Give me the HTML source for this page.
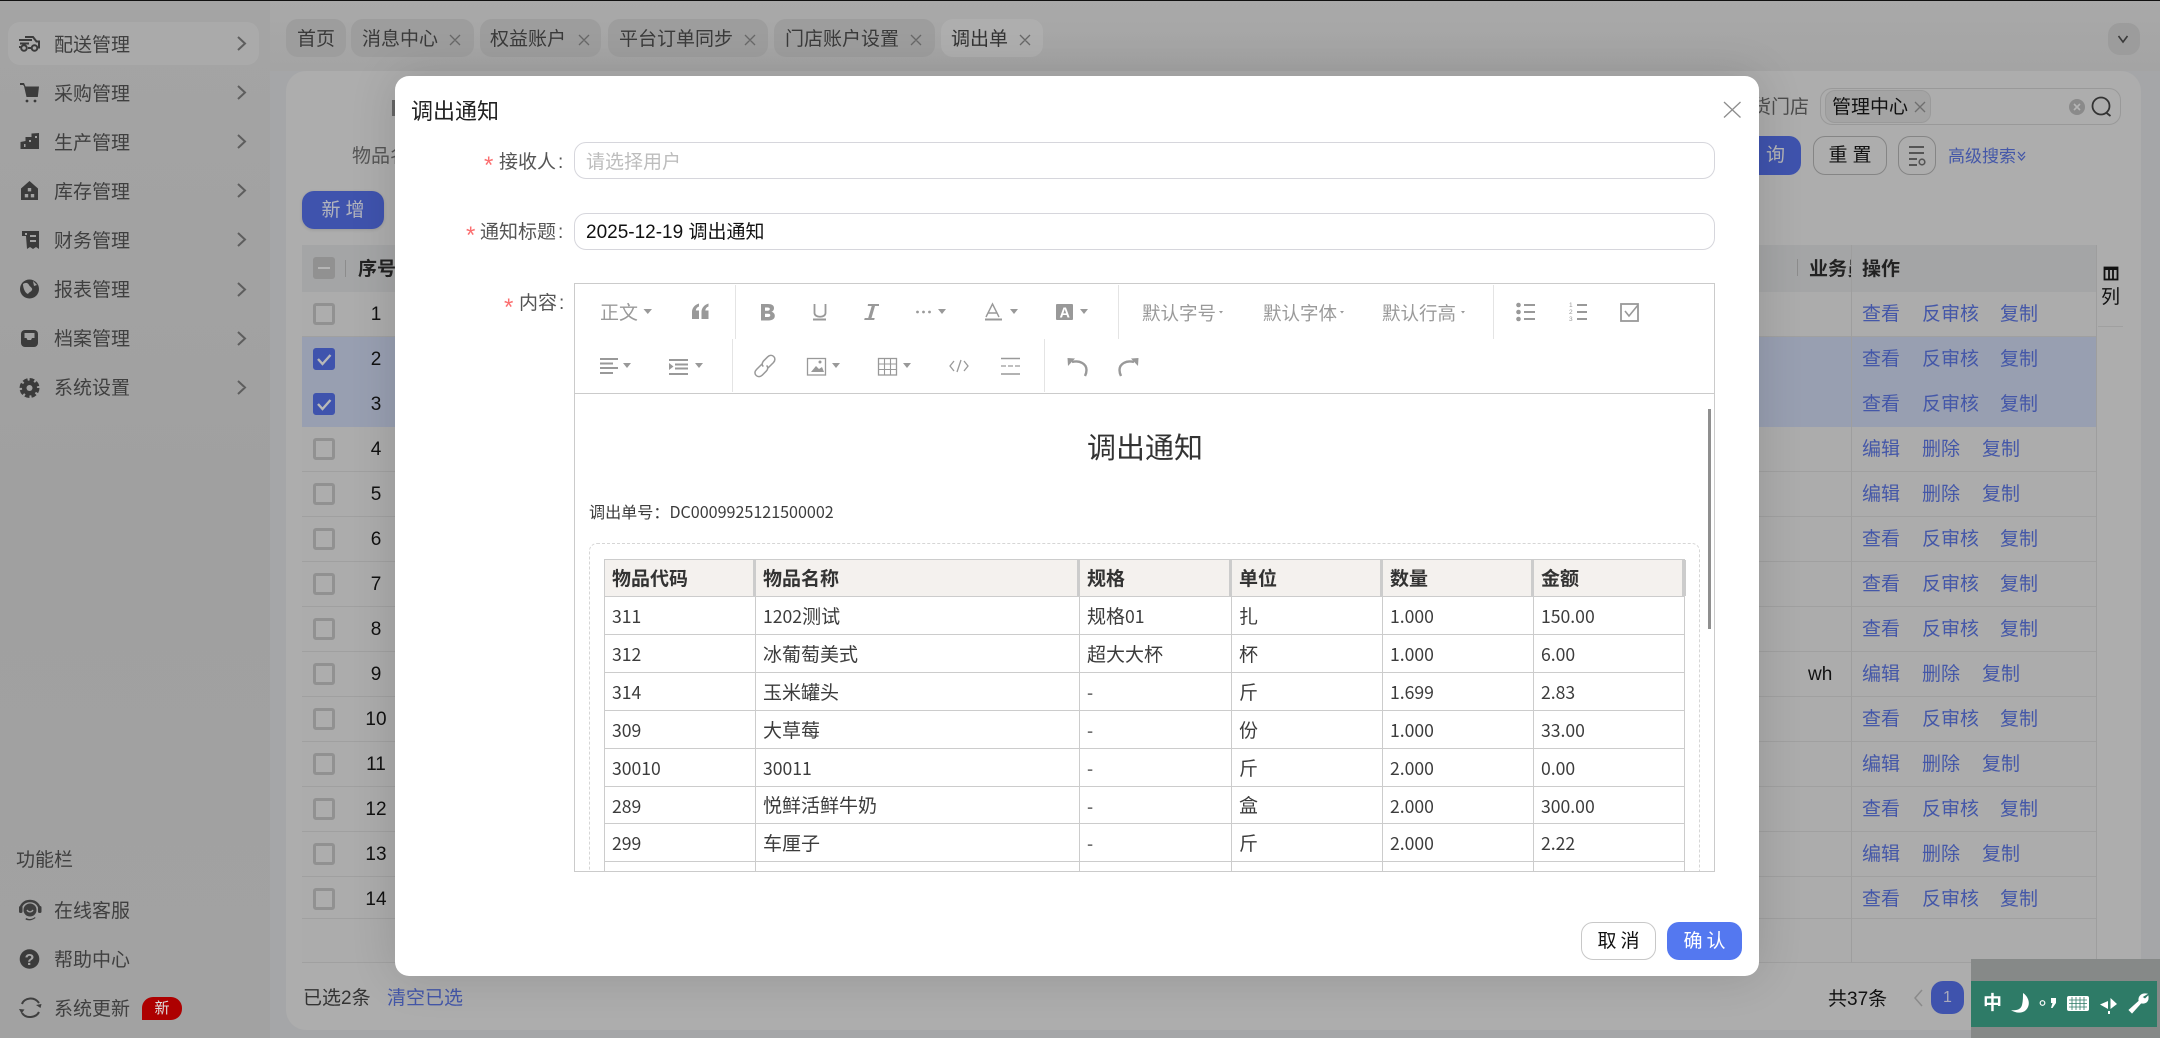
<!DOCTYPE html>
<html lang="zh-CN">
<head>
<meta charset="utf-8">
<title>调出单</title>
<style>
html,body{margin:0;padding:0;width:2160px;height:1038px;overflow:hidden;background:#a5a6a8}
body{font-family:"Liberation Sans","Noto Sans CJK SC",sans-serif;font-size:19px;color:#333;position:relative}
div,span{box-sizing:border-box}
.a{position:absolute}
.t{position:absolute;white-space:nowrap;line-height:24px;height:24px;margin-top:1px}
#side{left:0;top:0;width:270px;height:1038px;background:linear-gradient(180deg,#a4a4a4,#a0a0a0 50%,#a2a2a2)}
#top{left:270px;top:0;width:1890px;height:71px;background:linear-gradient(180deg,#a9a9a9,#a4a4a4)}
#bar{left:0;top:0;width:2160px;height:1.4px;background:#111}
.m{color:#3f3f3f;left:54px}
.tab{position:absolute;top:19px;height:38px;border-radius:12px;background:#9d9d9d}
.t.tabt{color:#3a3a3a;top:28px;margin-top:0}
#card{left:286px;top:71px;width:1855px;height:959px;border-radius:20px;background:#adadad}
#thead{left:302px;top:245px;width:1794px;height:47px;background:#a4a5a6}
.t.h{font-weight:700;color:#222;margin-top:2px}
#rows{left:302px;top:292px;width:1794px}
.r{position:relative;height:45px;background:#acacac;border-bottom:1px solid #a0a0a0}
.r.s{background:#989fb1;border-bottom-color:#989fb1}
.cb{position:absolute;left:11px;top:11px;width:22px;height:22px;border:3px solid #919191;border-radius:3px;background:#adadad}
.s .cb{background:#3f53ad;border-color:#3f53ad}
.n{position:absolute;left:54px;width:40px;text-align:center;top:11px;line-height:24px;color:#111}
.l{position:absolute;top:11px;line-height:24px;color:#4457a8;white-space:nowrap}
.l1{left:1560px}.l2{left:1620px}.l3{left:1698px}.l4{left:1680px}
.btn{position:absolute;border-radius:12px;text-align:center;white-space:nowrap}
#modal{left:395px;top:76px;width:1364px;height:900px;background:#fff;border-radius:14px;box-shadow:0 0 46px rgba(0,0,0,.14)}
.inp{position:absolute;left:179px;width:1141px;height:37px;border:1px solid #d6d6dc;border-radius:12px}
.lab{color:#555}
.lab i{font-style:normal;margin-left:2px}
.t.star{color:#fb6f70;font-size:24px;margin-top:0}
#ed{left:179px;top:207px;width:1141px;height:589px;border:1.4px solid #cbcbcb;background:#fff}
#edc{left:0;top:109px;width:1139px;height:478px;overflow:hidden;border-top:1.4px solid #cbcbcb}
.t.tb{color:#9a9a9a;margin-top:2px}
.dv{position:absolute;width:1px;background:#e4e4e4}
table{position:absolute;left:29px;top:165px;border-collapse:collapse;table-layout:fixed;width:1080px}
td,th{border:1.4px solid #ccc;padding:4px 0 0 7px;text-align:left;font-size:19px;line-height:24px;color:#3c3c3c;white-space:nowrap;position:relative;box-sizing:border-box}
td{overflow:hidden}
th{background:#f4f1ee;font-weight:700;color:#333}
th:after{content:"";position:absolute;right:-2px;top:0;bottom:0;width:4px;background:#ccc}
td span{font-family:"Noto Sans CJK SC",sans-serif;font-size:17.6px}
svg#ov{position:absolute;left:0;top:0;width:2160px;height:1038px;pointer-events:none}
</style>
</head>
<body>
<div class="a" id="side"></div>
<div class="a" id="top"></div>
<div class="a" style="left:8px;top:22px;width:251px;height:43px;border-radius:12px;background:#aaa"></div>
<div class="t m" style="top:33px">配送管理</div>
<div class="t m" style="top:82px">采购管理</div>
<div class="t m" style="top:131px">生产管理</div>
<div class="t m" style="top:180px">库存管理</div>
<div class="t m" style="top:229px">财务管理</div>
<div class="t m" style="top:278px">报表管理</div>
<div class="t m" style="top:327px">档案管理</div>
<div class="t m" style="top:376px">系统设置</div>
<div class="t m" style="left:16px;top:848px">功能栏</div>
<div class="t m" style="top:899px">在线客服</div>
<div class="t m" style="top:948px">帮助中心</div>
<div class="t m" style="top:997px">系统更新</div>
<div class="a" style="left:142px;top:997px;width:40px;height:23px;background:#ad0000;border-radius:11px 11px 11px 0;color:#ddd;font-size:15px;line-height:23px;text-align:center">新</div>

<div class="tab" style="left:286px;width:60px"></div>
<div class="tab" style="left:351px;width:123px"></div>
<div class="tab" style="left:480px;width:121px"></div>
<div class="tab" style="left:608px;width:160px"></div>
<div class="tab" style="left:774px;width:161px"></div>
<div class="tab" style="left:941px;width:102px;background:#aeaeae"></div>
<div class="t tabt" style="left:297px">首页</div>
<div class="t tabt" style="left:362px">消息中心</div>
<div class="t tabt" style="left:490px">权益账户</div>
<div class="t tabt" style="left:619px">平台订单同步</div>
<div class="t tabt" style="left:785px">门店账户设置</div>
<div class="t tabt" style="left:951px;color:#333">调出单</div>
<div class="a" style="left:2108px;top:23px;width:32px;height:32px;border-radius:12px;background:#9c9c9c"></div>

<div class="a" id="card"></div>
<div class="t" style="left:352px;top:144px;color:#555">物品名</div>
<div class="a" style="left:392px;top:100px;width:3px;height:16px;background:#666"></div>
<div class="t" style="left:1759px;top:95px;width:50px;overflow:hidden;color:#4c4c4c;direction:rtl">货门店</div>
<div class="a" style="left:1820px;top:88px;width:301px;height:37px;border:1px solid #999;border-radius:12px"></div>
<div class="a" style="left:1825px;top:90px;width:106px;height:33px;border:1px solid #9a9a9a;border-radius:10px;background:#a4a4a4"></div>
<div class="t" style="left:1832px;top:95px;color:#111">管理中心</div>
<div class="btn" style="left:1740px;top:136px;width:61px;height:39px;background:#3f53ad;color:#b5b5b5;line-height:39px;text-align:right;padding-right:16px">询</div>
<div class="btn" style="left:1813px;top:136px;width:74px;height:39px;border:1px solid #858585;color:#111;line-height:37px;letter-spacing:5px;padding-left:5px">重置</div>
<div class="btn" style="left:1898px;top:136px;width:38px;height:39px;border:1px solid #858585"></div>
<div class="t" style="left:1948px;top:144px;font-size:17px;color:#4457a8">高级搜索</div>
<div class="btn" style="left:302px;top:191px;width:82px;height:38px;background:#3f53ad;color:#b2b4bd;line-height:40px;letter-spacing:5px;padding-left:5px;box-shadow:0 1px 3px rgba(0,0,0,.12)">新增</div>

<div class="a" id="thead"></div>
<div class="a" style="left:313px;top:257px;width:22px;height:22px;background:#919191;border-radius:3px"></div>
<div class="a" style="left:318px;top:267px;width:12px;height:2px;background:#b5b5b5"></div>
<div class="a" style="left:345px;top:260px;width:1px;height:17px;background:#8c8c8c"></div>
<div class="t h" style="left:358px;top:256px">序号</div>
<div class="a" style="left:1797px;top:259px;width:1px;height:17px;background:#8c8c8c"></div>
<div class="t h" style="left:1809px;top:256px;width:42px;overflow:hidden">业务员</div>
<div class="t h" style="left:1862px;top:256px">操作</div>

<div class="a" id="rows">
<div class="r"><div class="cb"></div><div class="n">1</div><span class="l l1">查看</span><span class="l l2">反审核</span><span class="l l3">复制</span></div>
<div class="r s"><div class="cb"></div><div class="n">2</div><span class="l l1">查看</span><span class="l l2">反审核</span><span class="l l3">复制</span></div>
<div class="r s"><div class="cb"></div><div class="n">3</div><span class="l l1">查看</span><span class="l l2">反审核</span><span class="l l3">复制</span></div>
<div class="r"><div class="cb"></div><div class="n">4</div><span class="l l1">编辑</span><span class="l l2">删除</span><span class="l l4">复制</span></div>
<div class="r"><div class="cb"></div><div class="n">5</div><span class="l l1">编辑</span><span class="l l2">删除</span><span class="l l4">复制</span></div>
<div class="r"><div class="cb"></div><div class="n">6</div><span class="l l1">查看</span><span class="l l2">反审核</span><span class="l l3">复制</span></div>
<div class="r"><div class="cb"></div><div class="n">7</div><span class="l l1">查看</span><span class="l l2">反审核</span><span class="l l3">复制</span></div>
<div class="r"><div class="cb"></div><div class="n">8</div><span class="l l1">查看</span><span class="l l2">反审核</span><span class="l l3">复制</span></div>
<div class="r"><div class="cb"></div><div class="n">9</div><span class="l" style="left:1506px;color:#111">wh</span><span class="l l1">编辑</span><span class="l l2">删除</span><span class="l l4">复制</span></div>
<div class="r"><div class="cb"></div><div class="n">10</div><span class="l l1">查看</span><span class="l l2">反审核</span><span class="l l3">复制</span></div>
<div class="r"><div class="cb"></div><div class="n">11</div><span class="l l1">编辑</span><span class="l l2">删除</span><span class="l l4">复制</span></div>
<div class="r"><div class="cb"></div><div class="n">12</div><span class="l l1">查看</span><span class="l l2">反审核</span><span class="l l3">复制</span></div>
<div class="r"><div class="cb"></div><div class="n">13</div><span class="l l1">编辑</span><span class="l l2">删除</span><span class="l l4">复制</span></div>
<div class="r" style="height:42px"><div class="cb"></div><div class="n">14</div><span class="l l1">查看</span><span class="l l2">反审核</span><span class="l l3">复制</span></div>
<div class="r" style="height:44px"></div>
</div>
<div class="a" style="left:1851px;top:245px;width:1px;height:718px;background:#9e9e9e"></div>
<div class="a" style="left:2096px;top:245px;width:1px;height:718px;background:#9e9e9e"></div>
<div class="t" style="left:2101px;top:285px;color:#111">列</div>
<div class="a" style="left:2098px;top:326px;width:25px;height:1px;background:#a0a0a0"></div>

<div class="t" style="left:303px;top:986px;color:#333">已选2条</div>
<div class="t" style="left:387px;top:986px;color:#4457a8">清空已选</div>
<div class="t" style="left:1828px;top:987px;color:#111">共37条</div>
<div class="btn" style="left:1931px;top:981px;width:33px;height:33px;background:#3f53ad;color:#aab;line-height:33px;font-size:16px">1</div>

<div class="a" style="left:1971px;top:959px;width:189px;height:79px;background:#868988"></div>
<div class="a" style="left:1971px;top:981px;width:186px;height:46px;background:#2e7b67"></div>
<div class="t" style="left:1983px;top:991px;color:#fff;font-weight:700">中</div>

<div class="a" id="modal">
  <div class="t" style="left:16px;top:23px;font-size:22px;color:#222">调出通知</div>
  <div class="t star" style="left:89px;top:78px">*</div>
  <div class="t lab" style="left:104px;top:74px">接收人<i>:</i></div>
  <div class="inp" style="top:66px"></div>
  <div class="t" style="left:191px;top:74px;color:#bdbdbd">请选择用户</div>
  <div class="t star" style="left:71px;top:148px">*</div>
  <div class="t lab" style="left:85px;top:144px">通知标题<i>:</i></div>
  <div class="inp" style="top:137px"></div>
  <div class="t" style="left:191px;top:144px;color:#111">2025-12-19 调出通知</div>
  <div class="t star" style="left:109px;top:220px">*</div>
  <div class="t lab" style="left:124px;top:215px">内容<i>:</i></div>
  <div class="a" id="ed">
    <div class="dv" style="left:160px;top:1px;height:54px"></div>
    <div class="dv" style="left:543px;top:1px;height:54px"></div>
    <div class="dv" style="left:918px;top:1px;height:54px"></div>
    <div class="dv" style="left:157px;top:55px;height:53px"></div>
    <div class="dv" style="left:469px;top:55px;height:53px"></div>
    <div class="t tb" style="left:25px;top:16px">正文</div>
    <div class="t tb" style="left:567px;top:16px;font-size:18.5px">默认字号</div>
    <div class="t tb" style="left:688px;top:16px;font-size:18.5px">默认字体</div>
    <div class="t tb" style="left:807px;top:16px;font-size:18.5px">默认行高</div>
    <div class="a" id="edc">
      <div class="t" style="left:512px;top:33px;font-size:29px;line-height:36px;height:36px;color:#333;font-family:'Noto Sans CJK SC',sans-serif">调出通知</div>
      <div class="t" style="left:14px;top:104px;font-size:16.1px;color:#3c3c3c;font-family:'Noto Sans CJK SC',sans-serif">调出单号：DC0009925121500002</div>
      <div class="a" style="left:14px;top:149px;width:1111px;height:400px;border:1px dashed #d6d6d6;border-radius:8px"></div>
      <table>
        <colgroup><col style="width:151px"><col style="width:324px"><col style="width:152px"><col style="width:151px"><col style="width:151px"><col style="width:151px"></colgroup>
        <tr style="height:37px"><th>物品代码</th><th>物品名称</th><th>规格</th><th>单位</th><th>数量</th><th>金额</th></tr>
        <tr style="height:38px"><td><span>311</span></td><td><span>1202</span>测试</td><td>规格<span>01</span></td><td>扎</td><td><span>1.000</span></td><td><span>150.00</span></td></tr>
        <tr style="height:38px"><td><span>312</span></td><td>冰葡萄美式</td><td>超大大杯</td><td>杯</td><td><span>1.000</span></td><td><span>6.00</span></td></tr>
        <tr style="height:38px"><td><span>314</span></td><td>玉米罐头</td><td><span>-</span></td><td>斤</td><td><span>1.699</span></td><td><span>2.83</span></td></tr>
        <tr style="height:38px"><td><span>309</span></td><td>大草莓</td><td><span>-</span></td><td>份</td><td><span>1.000</span></td><td><span>33.00</span></td></tr>
        <tr style="height:38px"><td><span>30010</span></td><td><span>30011</span></td><td><span>-</span></td><td>斤</td><td><span>2.000</span></td><td><span>0.00</span></td></tr>
        <tr style="height:37px"><td><span>289</span></td><td>悦鲜活鲜牛奶</td><td><span>-</span></td><td>盒</td><td><span>2.000</span></td><td><span>300.00</span></td></tr>
        <tr style="height:38px"><td><span>299</span></td><td>车厘子</td><td><span>-</span></td><td>斤</td><td><span>2.000</span></td><td><span>2.22</span></td></tr>
        <tr style="height:38px"><td></td><td></td><td></td><td></td><td></td><td></td></tr>
      </table>
      <div class="a" style="left:1133px;top:15px;width:3px;height:220px;background:#8f8f8f"></div>
    </div>
  </div>
  <div class="btn" style="left:1186px;top:846px;width:75px;height:38px;border:1px solid #c8c8c8;color:#111;line-height:38px;letter-spacing:4px;padding-left:4px;background:#fff">取消</div>
  <div class="btn" style="left:1272px;top:846px;width:75px;height:38px;background:#5478f0;color:#fff;line-height:40px;letter-spacing:4px;padding-left:4px">确认</div>
</div>

<div class="a" id="bar"></div>

<svg id="ov" viewBox="0 0 2160 1038" xmlns="http://www.w3.org/2000/svg">
<!-- chevrons -->
<g fill="none" stroke="#5e5e5e" stroke-width="2">
<path d="M238 37l7 6.500-7 6.500M238 86l7 6.500-7 6.500M238 135l7 6.500-7 6.500M238 184l7 6.500-7 6.500M238 233l7 6.500-7 6.500M238 283l7 6.500-7 6.500M238 332l7 6.500-7 6.500M238 381l7 6.500-7 6.500"/>
</g>
<!-- car -->
<g fill="none" stroke="#3b3b3b" stroke-width="2">
<path d="M25 37h8l3.500 4.500h2.500v6h-1.500M31 48h-3M19 40h13M20 43.500h9M19 47h1.500"/>
<circle cx="24" cy="48" r="2.800"/><circle cx="34.500" cy="48" r="2.800"/>
</g>
<g fill="#3b3b3b">
<!-- cart -->
<path d="M20 83h4l1.500 3.500H39l-1.200 10.500H26.500L24 86 23 85h-3z"/><circle cx="27" cy="101" r="1.400"/><circle cx="35" cy="101" r="1.400"/>
<!-- stairs -->
<path d="M20.500 142l5-1v-4h6v-3.500l7.500-.5v16H20.500z"/>
<!-- house -->
<path d="M21 188.500L29.500 181 38 188.500V200H21z"/>
<!-- finance -->
<path d="M22 231h17v18l-3-2-3 2-3-2-3 2-1-13h-4z"/>
<!-- globe -->
<circle cx="29.500" cy="289" r="9.500"/>
<!-- inbox -->
<rect x="21" y="330" width="17" height="17" rx="4"/>
<!-- gear -->
<circle cx="29.500" cy="388" r="7.500"/>
<circle cx="29.500" cy="388" r="8.300" fill="none" stroke="#3b3b3b" stroke-width="3.400" stroke-dasharray="4.500 2"/>
<!-- help -->
<circle cx="29.500" cy="959" r="9.800"/>
</g>
<g fill="#a2a2a2">
<rect x="24" y="144" width="1.500" height="3"/><rect x="29" y="140" width="2" height="2"/><rect x="35" y="136" width="2" height="2"/>
<rect x="27.800" y="188" width="3.400" height="3.400"/><rect x="24.800" y="194" width="3.400" height="3.400"/><rect x="30.800" y="194" width="3.400" height="3.400"/>
<rect x="30" y="235" width="6" height="2"/><rect x="30" y="240" width="6" height="2"/><rect x="25" y="233" width="2" height="2"/>
<path d="M23 284c3-2 5-1 6 1s4 3 3 5-3 2-4 4c-3-1-5-6-5-10zM33 281l4 4-3 1z"/>
<path d="M24.500 333h10v5h-2.500l-1 2h-3.500l-1-2h-2z"/>
<circle cx="29.500" cy="388" r="3"/>
</g>
<text x="24.600" y="965" font-size="16" font-weight="700" fill="#a5a5a5" font-family="Liberation Sans">?</text>
<!-- headset -->
<g fill="none" stroke="#3f3f3f" stroke-width="2.400">
<path d="M20.500 912c-1-7 4-11 9.500-11s10.500 4 9.500 11"/>
</g>
<g fill="#3f3f3f"><circle cx="30" cy="910" r="6.500"/><rect x="19" y="906" width="3.500" height="7" rx="1.500"/><rect x="38" y="906" width="3.500" height="7" rx="1.500"/><path d="M26 918c3 1.500 6 1.500 9-1l.5 1c-3 2.500-7 3-10 1.500z"/></g>
<path d="M27 910c1.500 2.500 4.500 2.500 6 0" fill="none" stroke="#a2a2a2" stroke-width="1.300"/>
<!-- refresh -->
<g fill="none" stroke="#3f3f3f" stroke-width="2"><path d="M22 1004c2-6 12-8 17-1M39 1012c-3 6-13 7-17 1"/></g>
<path d="M36 1005l5.500-1-1 4zM19 1009l5.500 .5-3 4z" fill="#3f3f3f"/>

<!-- tab close -->
<g fill="none" stroke="#676767" stroke-width="1.300">
<path d="M450 35l10 10M460 35l-10 10M579 35l10 10M589 35l-10 10M745 35l10 10M755 35l-10 10M911 35l10 10M921 35l-10 10M1020 35l10 10M1030 35l-10 10"/>
<path d="M2118.500 36l4.500 6 4.500-6" stroke="#3a3a3a" stroke-width="1.600"/>
<path d="M1915 102l10 10M1925 102l-10 10" stroke="#6f6f6f"/>
<path d="M2092.500 106a8.500 8.500 0 1 0 17 0a8.500 8.500 0 1 0-17 0M2106 112.500l4.500 3.500" stroke="#333" stroke-width="1.800"/>
<path d="M2018 152l3.500 4 3.500-4M2018 156l3.500 4 3.500-4" stroke="#4457a8" stroke-width="1.300"/>
<path d="M1909 147h15M1909 153h15M1909 159h8M1909 165h8" stroke="#555" stroke-width="2"/>
<circle cx="1922" cy="162" r="2.800" stroke="#555" stroke-width="1.600"/>
</g>
<circle cx="2077" cy="107" r="8" fill="#8a8a8a"/>
<path d="M2074 104l6 6M2080 104l-6 6" stroke="#b5b5b5" stroke-width="1.600"/>

<!-- column icon -->
<g fill="none" stroke="#111" stroke-width="1.800"><rect x="2104.500" y="267.500" width="13" height="12"/><path d="M2109 268v11M2113 268v11"/></g>
<path d="M2104 268h14v2h-14z" fill="#111"/>

<!-- checks -->
<g fill="none" stroke="#b8b8b8" stroke-width="2.400">
<path d="M318 359l4.500 5 8-9M318 404l4.500 5 8-9"/>
</g>
<path d="M1922 990l-7 8 7 8" fill="none" stroke="#8a8a8a" stroke-width="1.500"/>

<!-- IME -->
<g fill="#fff">
<path d="M2023 993c6 4 8 12 3 17-4 4-11 3-15 0 6 1 10-1 11-5 1-4 1-8 1-12z"/>
<circle cx="2042.500" cy="1003" r="2.300" fill="none" stroke="#fff" stroke-width="1.200"/>
<path d="M2051 998h5v5l-3.500 5h-1.500l1.500-5h-1.500z"/>
<rect x="2067" y="996" width="22" height="15" rx="2"/>
<path d="M2108 994v7l-8 3.500 8 4.500zM2110.500 998l6.500 6-6.500 5zM2108 1011h2v3h-2z"/>
<path d="M2147 994c-5-1-9 2-8 7l-10 9 3 3 9-10c5 1 8-2 7-7l-3 3-3-2z" stroke="#fff" stroke-width=".8"/>
</g>
<g stroke="#2e7b67" stroke-width=".8"><path d="M2069 1000h18M2069 1003.500h18M2069 1007h18M2072 997v13M2076 997v13M2080 997v13M2084 997v13"/></g>

<!-- modal close -->
<path d="M1724 102l16.500 15.500M1740.500 102L1724 117.500" stroke="#8d8d8d" stroke-width="1.300" fill="none"/>

<!-- toolbar carets -->
<g fill="#999">
<path d="M643.500 309h8.500l-4.200 5zM938 309h8l-4 5zM1010 309h8l-4 5zM1080 309h8l-4 5zM623 363h8l-4 5zM695 363h8l-4 5zM832 363h8l-4 5zM903 363h8l-4 5z"/>
<path d="M1219 311h4l-2 2.500zM1340 311h4l-2 2.500zM1461 311h4l-2 2.500z"/>
<!-- quote -->
<path d="M692 319v-7c0-4 2.500-7 7-8.500v3c-2 .8-3 2-3.200 4h3.200v8.500zM701.500 319v-7c0-4 2.500-7 7-8.500v3c-2 .8-3 2-3.200 4h3.200v8.500z"/>
<circle cx="917.500" cy="312" r="1.400"/><circle cx="923.500" cy="312" r="1.400"/><circle cx="929.500" cy="312" r="1.400"/>
<rect x="985" y="318.500" width="17" height="2"/><rect x="813" y="318.500" width="13" height="2"/>
<rect x="1056" y="304" width="17" height="16" rx="1"/>
<!-- B / I -->
<path d="M761 304h7c4 0 6 1.500 6 4.200 0 1.700-1 2.900-2.500 3.500 2 .5 3.300 2 3.300 4.200 0 3-2.400 4.600-6.300 4.600H761zM765 307.500v3.200h2.500c1.500 0 2.300-.6 2.300-1.700s-.8-1.500-2.300-1.500zM765 313.800v3.200h3c1.500 0 2.300-.6 2.300-1.700s-.8-1.500-2.300-1.500z" fill-rule="evenodd"/>
<path d="M868 304h11v2l-4 0-3.500 12h3.200l-.5 2h-10l.5-2h3.500l3.500-12h-4z"/>
<!-- list bullets -->
<circle cx="1518.500" cy="305" r="2.300"/><circle cx="1518.500" cy="312" r="2.300"/><circle cx="1518.500" cy="319" r="2.300"/>
<!-- image -->
<path d="M811 372l5-6 3 3 3-2 2 5z"/>
<circle cx="820" cy="362" r="1.500"/>
<path d="M669 359h19v2h-19zM675 363.500h13v2h-13zM675 367.500h13v2h-13zM669 373h19v2h-19zM669 363l4.500 3.500-4.500 3.500z"/>
<path d="M1067.500 358l7.500 .5-7 7.500zM1138.500 358l-7.500 .5 7 7.500z"/>
</g>
<g fill="none" stroke="#999">
<path d="M814.500 304v9c0 5 11 5 11 0v-9" stroke-width="1.800"/>
<path d="M986 317l6.500-13 6.500 13M988.500 313h8" stroke-width="1.400"/>
<rect x="807.500" y="358.500" width="18" height="16.500" stroke-width="1.300"/>
<rect x="878.500" y="358.500" width="18" height="16.500" stroke-width="1.300"/>
<path d="M878 364h19M878 369.500h19M884.500 358v17M890.500 358v17" stroke-width="1.100"/>
<path d="M954 361l-4 5 4 5M964 361l4 5-4 5M961 360l-4 12" stroke-width="1.300"/>
<path d="M1001 358.500h19M1001 374h19" stroke-width="1.600"/>
<path d="M1001 366h19" stroke-width="1.300" stroke-dasharray="5 2"/>
<path d="M1072 362c8-2 14.500 2 14.500 8 0 2-.5 4-1.500 6" stroke-width="2.400"/>
<path d="M1134 362c-8-2-14.500 2-14.500 8 0 2 .5 4 1.500 6" stroke-width="2.400"/>
<path d="M762 364l-5.500 5.500c-2 2-2 4.500-.3 6s4 1.500 6-.3l4-4c2-2 2-4.500.3-5.700M768 368l5.500-5.500c1.800-2 1.800-4.500.2-6s-4-1.500-6 .3l-4 4c-2 2-2 4.500-.3 5.700" stroke-width="1.500"/>
<path d="M1524 305h11M1524 312h11M1524 319h11M1577 305h10M1577 312h10M1577 319h10" stroke-width="2"/>
<rect x="1621" y="304" width="17" height="17" stroke-width="1.800"/>
<path d="M1625 311l4 5 9-11" stroke-width="1.600" fill="#fff"/>
<path d="M600 359h18M600 363.500h13M600 368h18M600 373h13" stroke-width="2"/>
</g>
<text x="1059.500" y="317.500" font-size="14.500" font-weight="700" fill="#fff" font-family="Liberation Sans">A</text>
<text x="1569" y="307" font-size="6.500" fill="#999" font-family="Liberation Sans">1</text>
<text x="1569" y="314" font-size="6.500" fill="#999" font-family="Liberation Sans">2</text>
<text x="1569" y="321" font-size="6.500" fill="#999" font-family="Liberation Sans">3</text>
</svg>
</body>
</html>
